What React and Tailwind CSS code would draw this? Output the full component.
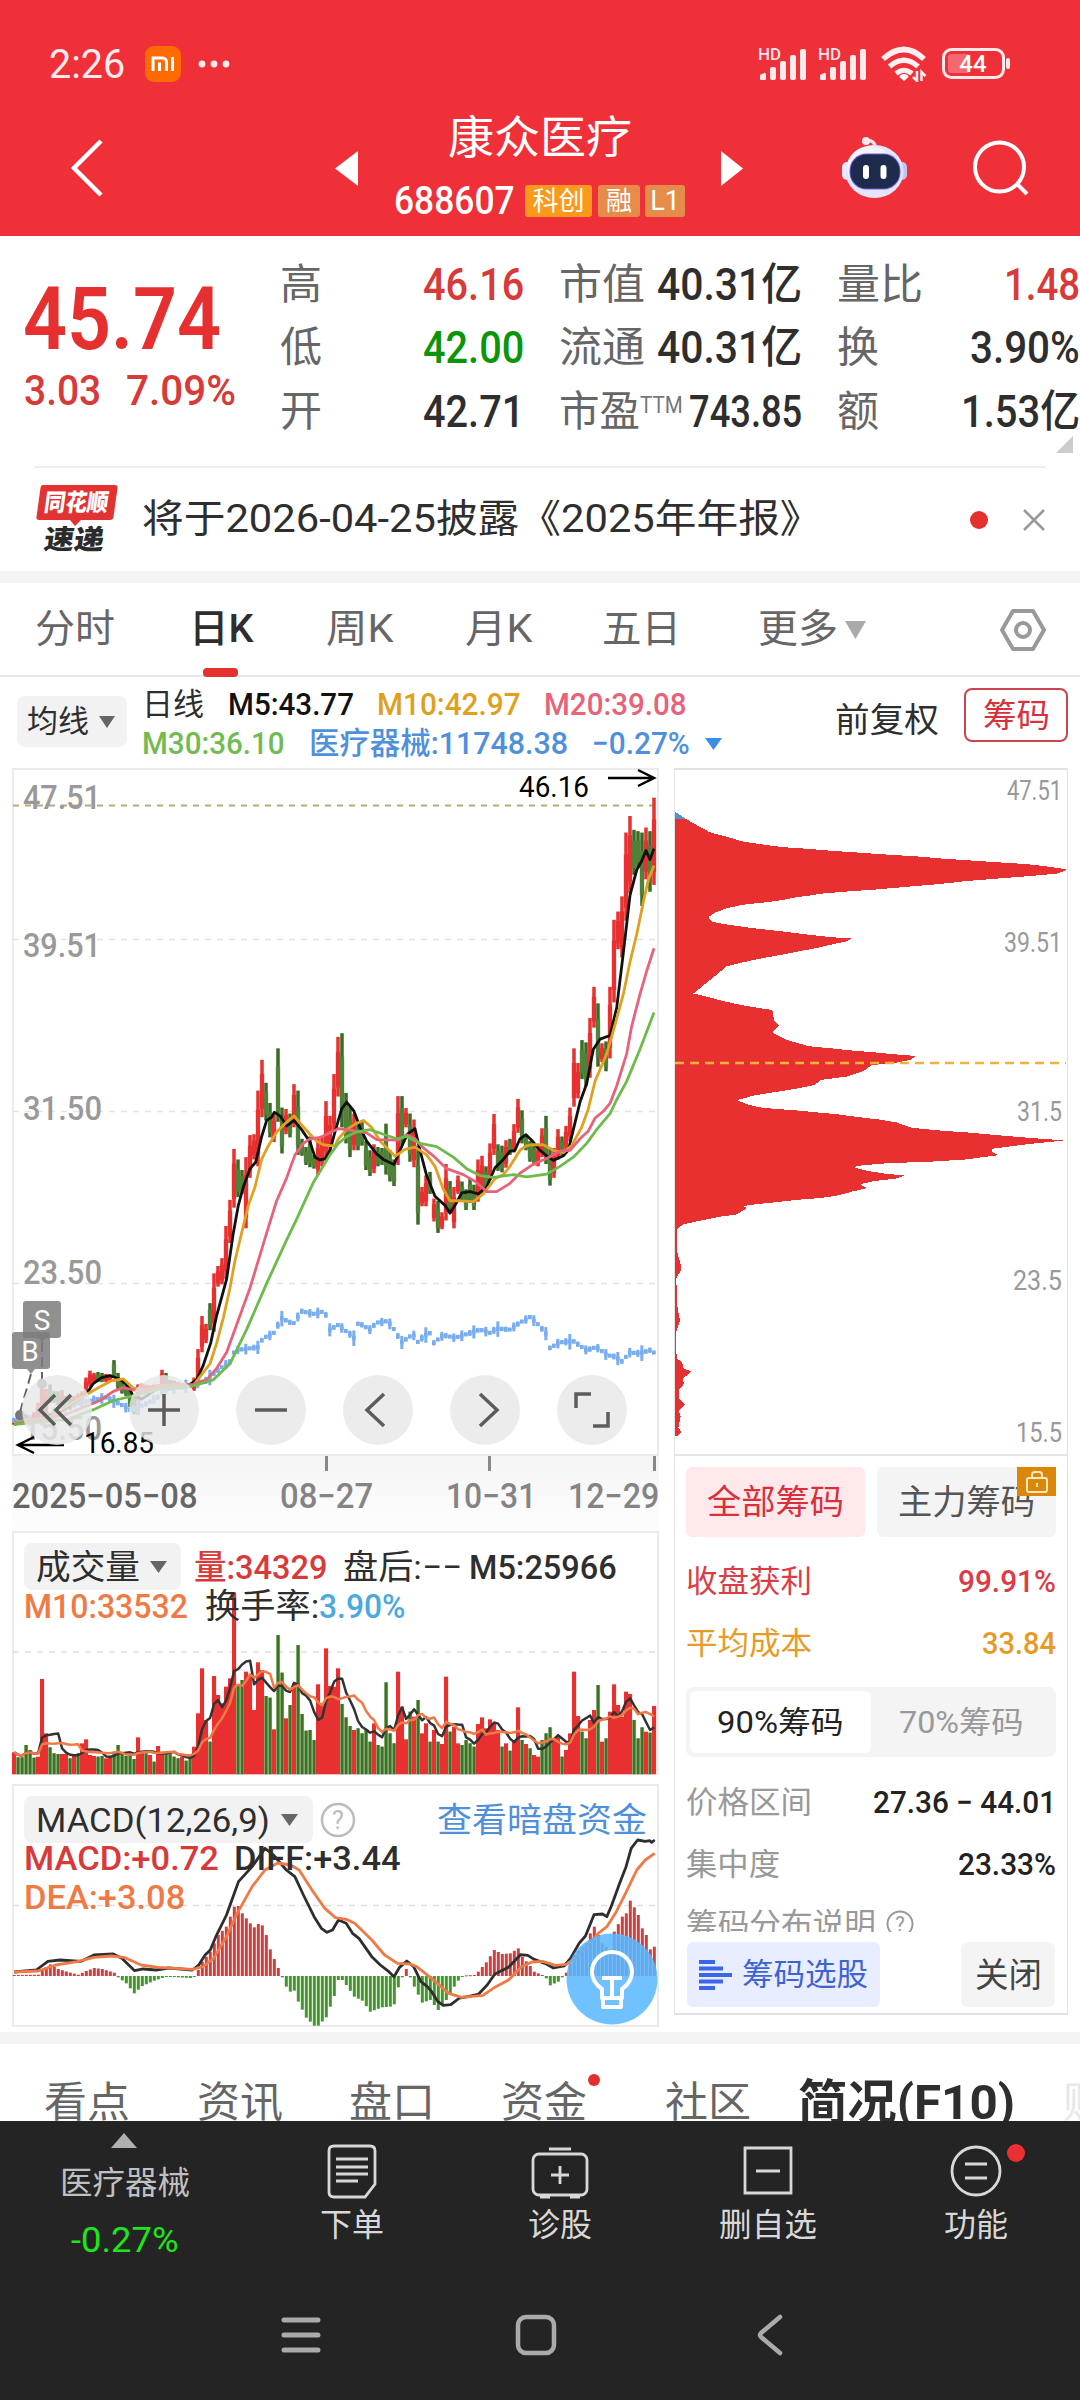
import { useLayoutEffect, useRef, useState } from 'react';

const STEP = 12;

// [high, low, rising] per trading day
const candles = [
  [1436, 1448, 1], [1425, 1447, 0], [1420, 1440, 0], [1425, 1440, 1], [1430, 1445, 0], [1420, 1440, 1],
  [1400, 1440, 1], [1351, 1430, 1], [1370, 1425, 1], [1360, 1400, 0], [1375, 1400, 0], [1375, 1405, 0],
  [1372, 1410, 1], [1385, 1410, 0], [1390, 1415, 0], [1385, 1410, 1], [1380, 1405, 1], [1375, 1395, 1],
  [1345, 1380, 1], [1330, 1365, 1], [1335, 1355, 1], [1333, 1355, 0], [1335, 1355, 0], [1337, 1355, 1],
  [1338, 1352, 1], [1307, 1345, 0], [1335, 1370, 0], [1350, 1380, 0], [1355, 1385, 0], [1365, 1410, 0],
  [1380, 1425, 0], [1360, 1425, 1], [1358, 1380, 1], [1360, 1375, 1], [1362, 1375, 0], [1360, 1372, 1],
  [1360, 1372, 1], [1328, 1365, 1], [1335, 1360, 0], [1350, 1365, 0], [1352, 1366, 0], [1355, 1367, 1],
  [1357, 1368, 0], [1357, 1368, 1], [1357, 1368, 1], [1345, 1374, 1], [1283, 1358, 1], [1211, 1290, 1],
  [1228, 1270, 1], [1183, 1242, 0], [1118, 1245, 1], [1102, 1147, 1], [1085, 1142, 1], [1015, 1130, 1],
  [958, 1052, 1], [847, 975, 1], [870, 952, 0], [893, 945, 0], [865, 1020, 1], [817, 910, 1],
  [815, 870, 1], [720, 885, 1], [653, 778, 1], [703, 785, 0], [747, 822, 0], [770, 832, 1],
  [628, 788, 0], [757, 857, 0], [760, 815, 1], [770, 822, 0], [706, 800, 1], [720, 860, 0],
  [825, 862, 0], [843, 882, 0], [820, 887, 0], [860, 890, 0], [825, 904, 1], [820, 885, 1],
  [743, 872, 1], [775, 850, 1], [684, 812, 1], [603, 733, 1], [595, 800, 0], [725, 835, 0],
  [755, 865, 0], [770, 850, 1], [790, 850, 0], [785, 840, 0], [830, 893, 0], [850, 906, 0],
  [837, 900, 1], [843, 885, 0], [845, 882, 0], [792, 903, 0], [850, 918, 0], [870, 928, 0],
  [732, 882, 1], [732, 840, 0], [758, 800, 1], [770, 875, 0], [783, 887, 1], [840, 1012, 0],
  [930, 972, 1], [905, 972, 1], [897, 945, 0], [955, 1005, 1], [960, 1030, 0], [985, 1022, 1],
  [880, 1003, 1], [917, 985, 0], [930, 1020, 1], [905, 945, 1], [918, 960, 0], [935, 980, 0],
  [910, 965, 0], [925, 980, 0], [870, 962, 1], [862, 945, 1], [885, 935, 0], [835, 915, 1],
  [771, 860, 1], [837, 895, 0], [840, 898, 0], [828, 888, 1], [825, 860, 0], [793, 855, 1],
  [738, 812, 1], [763, 835, 0], [815, 850, 0], [830, 875, 0], [835, 883, 0], [840, 885, 1],
  [802, 865, 1], [775, 880, 0], [845, 927, 0], [845, 910, 1], [804, 870, 1], [820, 860, 0],
  [797, 850, 1], [757, 830, 1], [628, 755, 1], [660, 737, 1], [610, 695, 0], [615, 710, 0],
  [562, 692, 1], [494, 583, 1], [530, 668, 0], [617, 658, 1], [613, 678, 0], [494, 650, 1],
  [348, 528, 1], [330, 412, 1], [297, 430, 1], [158, 350, 1], [122, 290, 1], [152, 250, 0],
  [155, 235, 0], [158, 318, 0], [147, 260, 1], [155, 287, 0], [82, 272, 1],
];

const ma5 =
  '42,1447 100,1438 180,1420 260,1380 280,1358 305,1345 330,1341 355,1347 380,1360 400,1385 425,1392 450,1380 480,1365 560,1365 590,1350 610,1318 632,1270 650,1210 680,1130 700,1030 715,970 730,930 750,890 767,876 785,820 800,785 815,778 823,767 840,775 860,797 882,785 905,805 930,832 945,865 960,871 975,869 990,850 1005,810 1025,760 1040,745 1062,765 1080,800 1100,830 1130,858 1150,870 1182,881 1200,850 1222,815 1245,803 1260,850 1280,905 1305,950 1335,970 1350,987 1365,970 1385,943 1410,940 1435,945 1460,930 1485,888 1510,870 1530,852 1545,850 1560,825 1578,816 1595,828 1620,850 1645,865 1660,872 1690,862 1705,850 1720,805 1740,745 1760,705 1780,630 1800,608 1830,600 1850,540 1870,420 1890,295 1910,240 1925,220 1938,197 1950,217 1962,193';
const ma10 =
  '42,1445 150,1430 240,1390 300,1365 335,1352 370,1348 400,1368 450,1375 480,1368 580,1362 630,1315 650,1270 670,1215 690,1150 705,1090 725,1030 745,970 765,930 785,870 805,840 830,810 855,792 882,775 905,795 930,815 950,830 970,838 990,840 1005,840 1015,825 1040,805 1065,793 1090,785 1115,800 1140,830 1185,863 1215,848 1245,843 1280,860 1305,885 1330,935 1350,960 1380,960 1420,962 1450,945 1485,912 1510,903 1530,885 1560,850 1580,840 1600,838 1630,838 1660,850 1690,855 1715,840 1745,800 1765,760 1785,700 1820,640 1840,590 1870,510 1890,440 1910,380 1930,310 1945,260 1962,230';
const ma20 =
  '42,1447 200,1425 300,1395 340,1375 370,1367 420,1375 480,1362 580,1360 620,1350 650,1325 680,1290 720,1210 750,1150 800,1030 830,960 860,910 885,860 910,835 930,825 960,822 1015,803 1040,805 1100,812 1130,827 1195,828 1220,816 1245,825 1270,845 1300,862 1340,890 1390,903 1430,920 1460,940 1490,940 1530,922 1560,900 1600,880 1640,868 1680,852 1710,850 1740,825 1765,808 1785,780 1810,765 1830,748 1850,710 1880,640 1895,580 1920,510 1940,460 1962,410';
const ma30 =
  '42,1447 200,1437 280,1415 340,1395 400,1385 480,1370 580,1363 640,1350 690,1315 740,1240 800,1140 860,1045 890,1000 940,920 990,860 1015,835 1040,820 1070,810 1110,805 1150,815 1190,825 1220,820 1260,835 1310,842 1360,865 1400,890 1440,905 1480,909 1540,903 1580,908 1640,902 1680,885 1720,865 1760,835 1790,805 1830,770 1850,740 1880,700 1920,630 1962,550';

// sector index, drawn under the price
const sector = [
  [42, 1438], [120, 1437], [200, 1405], [240, 1400], [280, 1393], [320, 1388], [360, 1402], [390, 1415],
  [430, 1405], [480, 1385], [490, 1372], [580, 1360], [620, 1350], [660, 1325], [690, 1310], [705, 1285],
  [740, 1282], [775, 1278], [790, 1258], [820, 1250], [845, 1215], [880, 1228], [905, 1200], [940, 1206],
  [975, 1200], [990, 1240], [1015, 1230], [1050, 1250], [1062, 1258], [1075, 1225], [1110, 1240],
  [1130, 1225], [1160, 1222], [1175, 1230], [1205, 1268], [1240, 1250], [1254, 1267], [1275, 1252],
  [1290, 1248], [1300, 1270], [1330, 1252], [1365, 1258], [1400, 1250], [1440, 1240], [1470, 1247],
  [1490, 1238], [1530, 1240], [1560, 1225], [1590, 1213], [1610, 1225], [1640, 1250], [1650, 1280],
  [1680, 1268], [1720, 1265], [1760, 1285], [1790, 1278], [1820, 1295], [1850, 1300], [1865, 1310],
  [1890, 1290], [1920, 1292], [1950, 1285], [1962, 1290],
];

const sectorBars = [9, 5, 14, 6, 18, 4, 10, 22, 8, 6, 16, 5, 12, 26, 7, 9, 4, 15];

// negative = falling day; the number is the top of the bar
const volumes = [
  937, -952, -952, -915, -930, -953, 950, 717, 880, -922, -940, -942, 942, 942, -955, 948, -940, 910, 898,
  945, 948, -950, -948, 955, 950, -935, -915, -942, -948, -945, -957, 892, 935, -940, 945, -965, 918, 935,
  -935, -940, -950, -955, 950, -962, -950, 920, 820, 685, 840, -905, 708, 765, 790, 740, 715, 457, -735,
  -720, 695, 705, 810, 667, 690, -768, -773, 868, -585, -698, 835, -795, 730, -615, -822, -872, -870, -900,
  733, 790, 625, 738, 740, 685, -792, -832, -858, 870, -865, -880, -870, -905, 850, -915, -920, -727, -880,
  -910, 695, 800, 898, -815, 830, -780, 880, 850, -905, 870, -905, 912, 710, -875, 860, 910, -915, -900,
  -910, -920, 852, 832, 865, 838, 850, 870, -920, 910, -932, 900, 802, -900, 912, -925, 945, 950, -900,
  -880, -862, 895, 890, -950, 930, 880, 695, 828, -875, -895, 840, 810, -735, 905, -895, 815, 733, 795, 830,
  755, 762, -840, -895, -862, 875, -878, 798,
];

const macdBars = [
  [0, 615], [6, 614], [7, 600], [9, 583], [11, 597], [14, 608], [16, 614], [18, 603], [20, 594], [22, 597],
  [25, 608], [26, 622], [28, 640], [30, 670], [32, 648], [35, 632], [38, 620], [44, 624], [45, 621],
  [46, 600], [47, 575], [49, 545], [51, 495], [53, 470], [55, 410], [56, 408], [57, 430], [59, 460],
  [60, 472], [61, 462], [62, 466], [63, 495], [64, 538], [65, 567], [66, 594], [67, 622], [68, 650],
  [69, 665], [70, 662], [71, 695], [73, 743], [75, 767], [76, 767], [78, 742], [80, 678], [81, 630],
  [82, 630], [83, 645], [85, 680], [87, 692], [89, 725], [92, 712], [94, 710], [95, 703], [96, 652],
  [97, 622], [98, 597], [99, 622], [100, 650], [102, 698], [104, 690], [105, 705], [106, 720], [108, 690],
  [110, 650], [111, 632], [112, 620], [113, 616], [115, 615], [116, 605], [118, 577], [120, 540],
  [122, 552], [124, 550], [126, 535], [127, 560], [129, 588], [130, 605], [132, 615], [133, 625],
  [134, 646], [136, 635], [137, 622], [138, 608], [140, 555], [142, 530], [143, 520], [144, 490],
  [145, 470], [146, 495], [147, 520], [149, 540], [150, 485], [152, 440], [153, 430], [154, 392],
  [155, 412], [156, 435], [157, 475], [158, 495], [159, 538], [160, 530],
];

const diffLine =
  '33,606 85,600 112,574 140,570 190,574 220,555 265,552 285,565 315,602 335,597 365,600 395,594 450,600 465,585 480,555 492,540 505,500 530,435 558,335 590,290 620,235 640,255 670,300 690,320 710,375 735,440 752,475 765,487 778,480 792,450 810,460 825,490 840,505 870,560 890,585 910,605 922,620 935,592 952,573 968,590 985,635 1000,650 1010,665 1025,695 1037,706 1055,704 1075,684 1095,680 1120,672 1140,645 1158,612 1190,592 1218,554 1235,556 1250,568 1275,580 1295,594 1320,588 1335,565 1355,520 1370,498 1390,434 1410,432 1420,440 1430,410 1450,340 1465,290 1477,235 1492,210 1510,214 1520,212 1525,217 1532,210';
const deaLine =
  '33,606 90,603 130,585 180,575 220,562 260,558 290,562 330,585 370,592 450,598 475,590 500,565 530,500 555,430 590,350 620,300 650,279 680,285 700,300 730,360 760,415 785,443 810,448 830,460 870,510 900,555 930,580 960,582 975,590 1010,625 1050,670 1080,682 1130,676 1160,650 1190,630 1220,590 1245,576 1270,574 1300,586 1325,583 1350,560 1400,490 1420,470 1440,430 1460,380 1490,300 1510,270 1532,250';

const chipShape = [
  [65, 133], [100, 148], [135, 162], [195, 174], [235, 183], [300, 190], [350, 195], [430, 199], [510, 204],
  [590, 208], [670, 212], [755, 216], [835, 221], [915, 225], [995, 229], [1080, 233], [1130, 237],
  [1170, 241], [1207, 245], [1180, 254], [1110, 259], [1040, 263], [975, 267], [905, 271], [848, 276],
  [790, 280], [710, 285], [635, 290], [555, 294], [475, 299], [430, 304], [390, 308], [350, 314],
  [300, 319], [235, 324], [185, 332], [150, 342], [130, 352], [140, 362], [180, 368], [255, 376],
  [340, 383], [395, 388], [450, 393], [500, 397], [560, 400], [545, 406], [490, 415], [450, 422],
  [405, 428], [365, 434], [285, 445], [235, 453], [185, 462], [140, 490], [85, 523], [130, 531], [180, 541],
  [230, 549], [285, 556], [322, 560], [328, 585], [342, 594], [322, 611], [365, 627], [430, 641],
  [500, 646], [550, 650], [615, 654], [685, 659], [753, 663], [735, 672], [680, 680], [620, 683],
  [595, 697], [545, 709], [465, 717], [450, 728], [380, 738], [320, 745], [270, 751], [215, 762],
  [250, 772], [290, 779], [410, 786], [520, 794], [580, 800], [640, 805], [695, 812], [740, 824],
  [840, 831], [920, 835], [990, 840], [1070, 845], [1140, 849], [1200, 852], [1120, 858], [1060, 863],
  [980, 871], [983, 880], [1002, 885], [950, 890], [900, 895], [790, 900], [670, 903], [590, 908],
  [565, 912], [610, 921], [665, 927], [720, 931], [690, 938], [630, 943], [585, 950], [605, 959],
  [560, 967], [520, 975], [470, 981], [400, 985], [340, 990], [285, 994], [235, 999], [245, 1004],
  [215, 1018], [165, 1023], [105, 1032], [55, 1040], [37, 1050], [36, 1100], [47, 1130], [47, 1145],
  [34, 1160], [36, 1220], [45, 1255], [32, 1285], [35, 1340], [52, 1350], [55, 1362], [78, 1370],
  [55, 1385], [56, 1398], [43, 1410], [42, 1430], [60, 1444], [42, 1458], [47, 1470], [40, 1495],
  [48, 1505], [38, 1515],
];

function lerp(points, x) {
  for (let i = 1; i < points.length; i++) {
    const [x0, y0] = points[i - 1];
    const [x1, y1] = points[i];
    if (x <= x1) return y0 + ((y1 - y0) * (x - x0)) / (x1 - x0);
  }
  return points[points.length - 1][1];
}

function average(values, i, size) {
  const part = values.slice(Math.max(0, i - size + 1), i + 1);
  return part.reduce((a, b) => a + b, 0) / part.length;
}

// Squeezes or stretches one line of text to the width of its box
function FitText({ className = '', children }) {
  const outer = useRef(null);
  const inner = useRef(null);
  const [scale, setScale] = useState(1);

  useLayoutEffect(() => {
    setScale(outer.current.clientWidth / inner.current.offsetWidth);
  }, [children]);

  return (
    <span ref={outer} className={`block shrink-0 whitespace-nowrap leading-none ${className}`}>
      <span ref={inner} className="inline-block origin-left" style={{ transform: `scaleX(${scale})` }}>
        {children}
      </span>
    </span>
  );
}

function Caret({ className = '' }) {
  return (
    <svg viewBox="0 0 16 12" preserveAspectRatio="none" className={`shrink-0 ${className}`} fill="currentColor">
      <path d="M0 0h16L8 12z" />
    </svg>
  );
}

function Signal() {
  return (
    <svg width="52" height="34" viewBox="0 0 52 34" fill="#fff" fillOpacity=".9">
      <text x="0" y="13" fontSize="16" fontWeight="500" textLength="23" lengthAdjust="spacingAndGlyphs">HD</text>
      <path d="M2 32v-3q0-2 2-2l2-1q2-1 2 2v4q0 1-1 1H3q-1 0-1-1z" />
      <rect x="12" y="20" width="6" height="13" rx="2" />
      <rect x="22" y="14" width="6" height="19" rx="2" />
      <rect x="32" y="8" width="6" height="25" rx="2" />
      <rect x="42" y="2" width="6" height="31" rx="2" />
    </svg>
  );
}

function StatusBar() {
  return (
    <div className="flex h-[92px] items-center pt-9 pl-[49px]">
      <FitText className="mt-0.5 w-[76px] text-[40px] text-white/90">2:26</FitText>
      <svg width="36" height="36" viewBox="0 0 36 36" className="ml-5">
        <rect width="36" height="36" rx="9" fill="#ff6b00" />
        <path d="M8 25V12h9.500a4 4 0 0 1 4 4v9M14.500 25v-8.500M27.500 11v14" fill="none" stroke="#fff" strokeWidth="3" />
      </svg>
      <svg width="32" height="10" viewBox="0 0 32 10" className="ml-[17px]" fill="#fff" fillOpacity=".9">
        <circle cx="4" cy="5" r="3.400" />
        <circle cx="16" cy="5" r="3.400" />
        <circle cx="28" cy="5" r="3.400" />
      </svg>
      <div className="ml-[528px] flex items-center">
        <Signal />
        <div className="w-2" />
        <Signal />
        <svg width="48" height="36" viewBox="0 0 48 36" className="ml-2.5" fill="none" stroke="#fff" strokeOpacity=".92" strokeWidth="5.500">
          <path d="M3 13Q24-6 44 13" />
          <path d="M9.500 20.500Q24 8 38 20.500" />
          <path d="M16 27.500Q24 21 32 27.500" strokeWidth="5" />
          <path d="M24 35l-4.500-4q0-3 4.500-3t4.500 3z" fill="#fff" stroke="none" />
          <path d="M37 25v10l-4-4M41.500 35V26l4 4" strokeWidth="2.500" />
        </svg>
        <svg width="70" height="32" viewBox="0 0 70 32" className="ml-3.5">
          <rect x="1.500" y="1.500" width="60" height="28" rx="8" fill="none" stroke="#fff" strokeOpacity=".9" strokeWidth="3" />
          <rect x="6" y="6" width="22" height="19" rx="3" fill="#fff" fillOpacity=".28" />
          <rect x="64" y="10" width="4" height="11" rx="2" fill="#fff" fillOpacity=".9" />
          <text x="31" y="24" fontSize="24" fontWeight="500" fill="#fff" textAnchor="middle">44</text>
        </svg>
      </div>
    </div>
  );
}

function Robot() {
  return (
    <svg width="67" height="64" viewBox="0 0 67 64" className="ml-[98px]">
      <path d="M25 4.500q9-1 9.500 8" fill="none" stroke="#f6dfee" strokeWidth="3.500" />
      <circle cx="25" cy="5" r="4" fill="#ffe9f1" />
      <rect x="1" y="26" width="10" height="18" rx="5" fill="#eceafb" />
      <rect x="56" y="26" width="10" height="18" rx="5" fill="#c3c6f0" />
      <ellipse cx="33.500" cy="35.500" rx="29" ry="26.500" fill="#e4e5fb" />
      <ellipse cx="29" cy="32" rx="23" ry="22" fill="#f4f2fd" />
      <rect x="8.500" y="17.500" width="51" height="36" rx="17" fill="#6a5ce0" />
      <rect x="9.500" y="18.500" width="49" height="34" rx="16" fill="#1f2b4d" />
      <rect x="22" y="29" width="6" height="14" rx="3" fill="#fff" />
      <rect x="39.500" y="29" width="6" height="14" rx="3" fill="#fff" />
    </svg>
  );
}

function NavBar() {
  return (
    <div className="flex h-[144px] items-center pt-2 pl-[70px]">
      <svg width="34" height="58" viewBox="0 0 34 58" fill="none" stroke="#fff" strokeWidth="4.500">
        <path d="M31 2L4 29l27 27" />
      </svg>
      <svg width="23" height="35" viewBox="0 0 23 35" className="ml-[231px]" fill="#fff">
        <path d="M23 0v35L0 17.500z" />
      </svg>
      <div className="flex w-[363px] flex-col items-center">
        <FitText className="w-[184px] text-[45px] text-white">康众医疗</FitText>
        <div className="mt-[21px] flex items-center">
          <FitText className="w-[121px] text-[38px] font-medium text-white">688607</FitText>
          <span className="ml-2.5 flex h-8 w-[67px] items-center justify-center rounded-[3px] bg-[#fa991c] text-[26px] leading-none text-white">科创</span>
          <span className="ml-1.5 flex h-8 w-[42px] items-center justify-center rounded-[3px] bg-[#e58c4a] text-[26px] leading-none text-white">融</span>
          <span className="ml-[5px] flex h-8 w-10 items-center justify-center rounded-[3px] bg-[#e58c4a] text-[27px] leading-none text-white">L1</span>
        </div>
      </div>
      <svg width="22" height="35" viewBox="0 0 22 35" fill="#fff">
        <path d="M0 0v35l22-17.500z" />
      </svg>
      <Robot />
      <svg width="58" height="56" viewBox="0 0 58 56" className="ml-[65px]" fill="none" stroke="#fff" strokeWidth="4">
        <circle cx="26.500" cy="27" r="24.500" />
        <path d="M44 44l10 10" />
      </svg>
    </div>
  );
}

function Stat({ label, sup, value, color = 'text-[#2e2e2e]', labelWidth, width }) {
  return (
    <div className="flex h-[63.500px] items-center">
      <FitText className={`-ml-px text-[42px] text-[#666] ${labelWidth}`}>{label}</FitText>
      {sup && <FitText className="mb-3 w-[43px] text-[23px] text-[#777]">{sup}</FitText>}
      <div className="flex-1" />
      <FitText className={`text-[44px] font-medium ${color} ${width}`}>{value}</FitText>
    </div>
  );
}

function Quote() {
  return (
    <section className="flex h-[230px] pl-6">
      <div className="w-[257px] pt-[39px]">
        <FitText className="-ml-px w-[198px] text-[88px] font-semibold text-[#e63030]">45.74</FitText>
        <div className="mt-1.5 flex">
          <FitText className="w-[77px] text-[43px] font-medium text-[#d83a3a]">3.03</FitText>
          <FitText className="ml-[25px] w-[110px] text-[43px] font-medium text-[#d83a3a]">7.09%</FitText>
        </div>
      </div>
      <div className="w-[243px] pt-[17px]">
        <Stat label="高" labelWidth="w-[42px]" value="46.16" color="text-[#d83a3a]" width="w-[101px]" />
        <Stat label="低" labelWidth="w-[42px]" value="42.00" color="text-[#0a950a]" width="w-[101px]" />
        <Stat label="开" labelWidth="w-[42px]" value="42.71" width="w-[101px]" />
      </div>
      <div className="ml-9 w-[242px] pt-[17px]">
        <Stat label="市值" labelWidth="w-[86px]" value="40.31亿" width="w-[145px]" />
        <Stat label="流通" labelWidth="w-[86px]" value="40.31亿" width="w-[145px]" />
        <Stat label="市盈" sup="TTM" labelWidth="w-[81px]" value="743.85" width="w-[113px]" />
      </div>
      <div className="relative ml-9 w-[242px] pt-[17px]">
        <Stat label="量比" labelWidth="w-[86px]" value="1.48" color="text-[#d83a3a]" width="w-[76px]" />
        <Stat label="换" labelWidth="w-[42px]" value="3.90%" width="w-[110px]" />
        <Stat label="额" labelWidth="w-[42px]" value="1.53亿" width="w-[119px]" />
        <svg width="17" height="17" viewBox="0 0 17 17" className="absolute right-[7px] bottom-[13px]">
          <path d="M17 0v17H0z" fill="#ccc" />
        </svg>
      </div>
    </section>
  );
}

function News() {
  return (
    <section className="mx-[35px] flex h-[105px] items-center border-t-2 border-[#ececec]">
      <svg width="84" height="70" viewBox="0 0 84 70">
        <path d="M8 0h72q3 0 2.500 3l-4 29q-.5 3-3.500 3H46l-6 6-5-6H4q-3 0-2.500-3l4-29q.5-3 2.500-3z" fill="#e23232" />
        <text x="9" y="26" fontSize="24" fontWeight="900" fill="#fff" textLength="64" lengthAdjust="spacingAndGlyphs" transform="skewX(-8) translate(3 0)">同花顺</text>
        <text x="9" y="64" fontSize="27" fontWeight="900" fill="#2b2b2b" textLength="60" lengthAdjust="spacingAndGlyphs" transform="skewX(-8) translate(8 0)">速递</text>
      </svg>
      <FitText className="ml-[23px] w-[680px] text-[39px] text-[#2e2e2e]">将于2026-04-25披露《2025年年报》</FitText>
      <span className="ml-[148px] size-[18px] shrink-0 rounded-full bg-[#e63030]" />
      <svg width="22" height="22" viewBox="0 0 22 22" className="ml-[35px] shrink-0" stroke="#999" strokeWidth="2.500">
        <path d="M1 1l20 20M21 1L1 21" />
      </svg>
    </section>
  );
}

function PeriodTabs() {
  return (
    <div className="flex h-[94px] items-center border-b-2 border-[#e6e6e6] pt-px pl-[35px] text-[39px] text-[#666]">
      <FitText className="w-[80px]">分时</FitText>
      <div className="relative ml-[74px]">
        <FitText className="w-[65px] font-medium text-[#2e2e2e]">日K</FitText>
        <span className="absolute top-[58px] left-[14px] h-[9px] w-[35px] rounded-[4px] bg-[#e63030]" />
      </div>
      <FitText className="ml-[72px] w-[67px]">周K</FitText>
      <FitText className="ml-[72px] w-[67px]">月K</FitText>
      <FitText className="ml-[70px] w-[79px]">五日</FitText>
      <FitText className="ml-[77px] w-[80px]">更多</FitText>
      <Caret className="ml-[7px] h-[18px] w-[21px] text-[#aaa]" />
      <svg width="46" height="44" viewBox="0 0 46 44" className="ml-[134px]" fill="none" stroke="#999" strokeWidth="4">
        <path d="M13 3h20l11 19-11 19H13L2 22z" strokeLinejoin="round" />
        <circle cx="23" cy="22" r="7" />
      </svg>
    </div>
  );
}

function Averages() {
  return (
    <div className="flex h-[90px] items-start pt-[11px] pl-[17px]">
      <div className="mt-2 flex h-[51px] w-[110px] items-center rounded-lg bg-[#f2f2f2] pl-2.5">
        <FitText className="w-[62px] text-[31px] text-[#2e2e2e]">均线</FitText>
        <Caret className="ml-2.5 h-3 w-4 text-[#666]" />
      </div>
      <div className="ml-[15px] w-[693px] text-[31px] font-medium">
        <div className="flex h-[33px] items-center">
          <FitText className="w-[62px] font-normal text-[#2e2e2e]">日线</FitText>
          <FitText className="ml-[24px] w-[126px] text-[#111]">M5:43.77</FitText>
          <FitText className="ml-[23px] w-[144px] text-[#e0a01e]">M10:42.97</FitText>
          <FitText className="ml-[23px] w-[143px] text-[#e8627a]">M20:39.08</FitText>
        </div>
        <div className="mt-1.5 flex h-[33px] items-center">
          <FitText className="w-[143px] text-[#72bb52]">M30:36.10</FitText>
          <FitText className="ml-6 w-[259px] text-[#4f90dc]">医疗器械:11748.38</FitText>
          <FitText className="ml-6 w-[98px] text-[#4f90dc]">−0.27%</FitText>
          <Caret className="ml-[15px] h-3 w-[17px] text-[#3d8de6]" />
        </div>
      </div>
      <FitText className="mt-[15px] w-[104px] text-[34px] text-[#2e2e2e]">前复权</FitText>
      <div className="ml-[25px] flex h-[54px] w-[104px] items-center justify-center rounded-lg border-2 border-[#cc4450]">
        <FitText className="w-[67px] text-[33px] text-[#d8303c]">筹码</FitText>
      </div>
    </div>
  );
}

function PriceLabel({ x, y, w, size = 33, color = '#999', weight = 500, children }) {
  return (
    <text x={x} y={y} fontSize={size} fontWeight={weight} fill={color} textLength={w} lengthAdjust="spacingAndGlyphs">
      {children}
    </text>
  );
}

const controls = [
  { cx: 57, d: 'M55 1395l-15 15 15 15M71 1395l-15 15 15 15' },
  { cx: 164, d: 'M148 1410h32M164 1394v32' },
  { cx: 271, d: 'M255 1410h32' },
  { cx: 378, d: 'M384 1394l-17 16 17 16' },
  { cx: 485, d: 'M480 1394l17 16-17 16' },
  { cx: 592, d: 'M576 1408v-14h15M608 1412v14h-15' },
];

function PriceChart() {
  return (
    <svg viewBox="12 768 647 688" width="647" height="688" className="block">
      <rect x="13" y="769" width="645" height="686" fill="#fff" stroke="#ebebeb" strokeWidth="2" />
      <path d="M13 939.500h645M13 1111.500h645M13 1283.500h645" stroke="#e4e4e4" strokeWidth="1.500" strokeDasharray="6 6" />
      <path d="M13 805.500h645" stroke="#bda87c" strokeWidth="2" strokeDasharray="6 6" />

      <PriceLabel x="23" y="809" w="78">47.51</PriceLabel>
      <PriceLabel x="23" y="957" w="78">39.51</PriceLabel>
      <PriceLabel x="23" y="1120" w="79">31.50</PriceLabel>
      <PriceLabel x="23" y="1284" w="79">23.50</PriceLabel>
      <PriceLabel x="23" y="1440" w="79">15.50</PriceLabel>

      <g transform="translate(0 760) scale(.33333 .45914)">
        {candles.map(([high, low, up], i) => {
          const x = 42 + i * STEP;
          const h = low - high;
          return (
            <g key={i} fill={up ? '#e63230' : '#3c6b25'}>
              <rect x={x - 5.25} y={high} width="10.500" height={h} />
              <rect x={x - 6.5} y={high + h * 0.25} width="13" height={h * 0.6} fill={up ? '#e83030' : '#4f8238'} />
            </g>
          );
        })}
        {candles.map((c, i) => {
          const x = 42 + i * STEP;
          const h = sectorBars[i % sectorBars.length];
          return (
            <g key={i} fill="#78adee">
              <rect x={x - 6} y={lerp(sector, x) - 4} width="11" height="9" />
              <rect x={x - 5} y={lerp(sector, x) - h * 0.6} width="9" height={h * 1.3} />
            </g>
          );
        })}
        <g fill="none" strokeWidth="2.800" strokeLinejoin="round">
          <polyline points={ma5} stroke="#111" vectorEffect="non-scaling-stroke" />
          <polyline points={ma10} stroke="#e0a022" vectorEffect="non-scaling-stroke" />
          <polyline points={ma20} stroke="#e8637a" vectorEffect="non-scaling-stroke" />
          <polyline points={ma30} stroke="#6dbb4b" vectorEffect="non-scaling-stroke" />
        </g>
      </g>

      {/* trade markers */}
      <path d="M42 1342v41M31 1374l-11 38" stroke="#666" strokeWidth="2" strokeDasharray="10 5" />
      <circle cx="42" cy="1384" r="5" fill="#777" />
      <circle cx="20" cy="1415" r="5" fill="#777" />
      <path d="M26 1301h32q3 0 3 3v31q0 3-3 3H46l-4 4-4-4H26q-3 0-3-3v-31q0-3 3-3z" fill="#7d7d7d" fillOpacity=".85" />
      <path d="M15 1332h32q3 0 3 3v31q0 3-3 3H35l-4 5-4-5H15q-3 0-3-3v-31q0-3 3-3z" fill="#7d7d7d" fillOpacity=".85" />
      <text x="42" y="1330" fontSize="28" fill="#fff" textAnchor="middle">S</text>
      <text x="30" y="1361" fontSize="28" fill="#fff" textAnchor="middle">B</text>

      <PriceLabel x="519" y="797" w="70" size={29} color="#000" weight={400}>46.16</PriceLabel>
      <path d="M608 778h45M638 770l16 8-16 8" fill="none" stroke="#000" strokeWidth="2.500" />
      <PriceLabel x="84" y="1453" w="70" size={29} color="#000" weight={400}>16.85</PriceLabel>
      <path d="M64 1445H19M34 1437l-16 8 16 8" fill="none" stroke="#000" strokeWidth="2.500" />

      {controls.map((c) => (
        <g key={c.cx}>
          <circle cx={c.cx} cy="1410" r="35" fill="#e8e8e8" fillOpacity=".82" />
          <path d={c.d} fill="none" stroke="#5c5c5c" strokeWidth="3.500" />
        </g>
      ))}
    </svg>
  );
}

function DateAxis() {
  return (
    <div className="h-[75px] bg-linear-to-b from-[#f5f5f5] to-[#fdfdfd]">
      <div className="flex h-[15px]">
        <span className="ml-[313px] w-[3px] bg-[#888]" />
        <span className="ml-[160px] w-[3px] bg-[#888]" />
        <span className="ml-[162px] w-[3px] bg-[#888]" />
      </div>
      <div className="mt-2 flex text-[35px] font-medium text-[#848484]">
        <FitText className="w-[186px] text-[#666]">2025−05−08</FitText>
        <FitText className="ml-[82px] w-[93px]">08−27</FitText>
        <FitText className="ml-[73px] w-[90px]">10−31</FitText>
        <FitText className="ml-[32px] w-[91px]">12−29</FitText>
      </div>
    </div>
  );
}

function VolumePanel() {
  const tops = volumes.map(Math.abs);
  const line = (size) => tops.map((t, i) => `${33 + i * 9.36},${average(tops, i, size)}`).join(' ');
  return (
    <div className="relative h-[244px] w-[647px] border-x-2 border-t-2 border-[#ebebeb] bg-white pl-[10px]">
      <svg viewBox="12 1531 647 244" width="647" height="244" className="absolute -top-0.5 -left-0.5">
        <path d="M13 1652h645" stroke="#ddd" strokeWidth="1.500" strokeDasharray="6 6" />
        <g transform="translate(0 1440) scale(.42735 .33333)">
          {volumes.map((v, i) => {
            const top = Math.abs(v);
            const x = 33 + i * 9.36;
            if (v > 0) return <rect key={i} x={x - 4.9} y={top} width="9.600" height={1003 - top} fill="#e83030" />;
            return (
              <g key={i}>
                <rect x={x - 4.7} y={top} width="9.400" height={1003 - top} fill="#86b070" />
                <rect x={x - 3} y={top} width="6" height={1003 - top} fill="#3f6f28" />
              </g>
            );
          })}
          <g fill="none" strokeWidth="2.500" strokeLinejoin="round">
            <polyline points={line(5)} stroke="#333" vectorEffect="non-scaling-stroke" />
            <polyline points={line(10)} stroke="#f07a45" vectorEffect="non-scaling-stroke" />
          </g>
        </g>
      </svg>
      <div className="relative pt-[10px] text-[34px]">
        <div className="flex items-center">
          <div className="flex h-[47px] w-[157px] items-center rounded-lg bg-[#f2f2f2] pl-3">
            <FitText className="w-[104px] text-[#2e2e2e]">成交量</FitText>
            <Caret className="ml-2.5 h-3 w-[17px] text-[#666]" />
          </div>
          <FitText className="ml-[13px] w-[134px] font-medium text-[#d83a3a]">量:34329</FitText>
          <FitText className="ml-[15px] w-[119px] text-[#2e2e2e]">盘后:−−</FitText>
          <FitText className="ml-[7px] w-[148px] font-medium text-[#2e2e2e]">M5:25966</FitText>
        </div>
        <div className="-mt-px flex">
          <FitText className="w-[164px] font-medium text-[#f07a45]">M10:33532</FitText>
          <FitText className="ml-[17px] w-[114px] text-[#2e2e2e]">换手率:</FitText>
          <FitText className="w-[86px] font-medium text-[#4ba9e0]">3.90%</FitText>
        </div>
      </div>
    </div>
  );
}

function MacdPanel() {
  return (
    <div className="relative mt-[9px] h-[243px] w-[647px] border-2 border-[#ebebeb] bg-white pl-[10px]">
      <svg viewBox="12 1784 647 243" width="647" height="243" className="absolute -top-0.5 -left-0.5">
        <path d="M13 1905.500h645" stroke="#ddd" strokeWidth="1.500" strokeDasharray="6 6" />
        <g transform="translate(0 1770) scale(.42735 .33333)">
          {volumes.map((v, i) => {
            const y = lerp(macdBars, i);
            const up = y < 618;
            return (
              <rect
                key={i}
                x={30 + i * 9.36}
                y={up ? y : 618}
                width="7"
                height={Math.max(3, Math.abs(618 - y))}
                fill={up ? '#cf4040' : '#45962f'}
              />
            );
          })}
          <g fill="none" strokeWidth="2.800" strokeLinejoin="round">
            <polyline points={diffLine} stroke="#2e2e2e" vectorEffect="non-scaling-stroke" />
            <polyline points={deaLine} stroke="#f07a45" vectorEffect="non-scaling-stroke" />
          </g>
        </g>
      </svg>
      <div className="relative pt-[10px] text-[34px]">
        <div className="flex items-center">
          <div className="flex h-[47px] w-[289px] items-center rounded-lg bg-[#f2f2f2] pl-3">
            <FitText className="w-[234px] text-[#2e2e2e]">MACD(12,26,9)</FitText>
            <Caret className="ml-[11px] h-3 w-[17px] text-[#666]" />
          </div>
          <svg width="36" height="36" viewBox="0 0 36 36" className="ml-[7px]">
            <circle cx="18" cy="18" r="16" fill="none" stroke="#bbb" strokeWidth="2.500" />
            <text x="18" y="27" fontSize="25" fill="#bbb" textAnchor="middle">?</text>
          </svg>
          <FitText className="ml-[81px] w-[210px] text-[#4f90dc]">查看暗盘资金</FitText>
        </div>
        <div className="mt-[-2px] flex">
          <FitText className="w-[195px] font-medium text-[#d83a3a]">MACD:+0.72</FitText>
          <FitText className="ml-[15px] w-[167px] font-medium text-[#2e2e2e]">DIFF:+3.44</FitText>
        </div>
        <FitText className="mt-[5px] w-[161px] font-medium text-[#f07a45]">DEA:+3.08</FitText>
      </div>
      <svg width="92" height="92" viewBox="0 0 92 92" className="absolute -right-px bottom-0">
        <circle cx="46" cy="46" r="45.500" fill="#5ab8ff" fillOpacity=".87" />
        <g fill="none" stroke="#fff" strokeWidth="4" strokeLinejoin="round">
          <path d="M36 65V56q-10-7-10-17a20 20 0 0 1 40 0q0 10-10 17v9z" />
          <path d="M37 65v9h18v-9M36 45h20M46 45v19" />
        </g>
      </svg>
    </div>
  );
}

function ChipChart() {
  const points = [[30, 133], ...chipShape, [30, 1515]].map((p) => p.join(',')).join(' ');
  return (
    <svg viewBox="675 770 391 684" width="391" height="684" className="block">
      <g transform="translate(665 760) scale(.33333 .44643)" shapeRendering="crispEdges">
        <path d="M30 116l35 17H30z" fill="#4f90dc" />
        <polygon points={points} fill="#e83030" />
      </g>
      <path d="M675 1063h391" stroke="#efb33d" strokeWidth="2.500" strokeDasharray="9 6" />
      <PriceLabel x="1007" y="800" w="55" size={27} weight={400}>47.51</PriceLabel>
      <PriceLabel x="1004" y="952" w="58" size={27} weight={400}>39.51</PriceLabel>
      <PriceLabel x="1017" y="1121" w="45" size={27} weight={400}>31.5</PriceLabel>
      <PriceLabel x="1013" y="1290" w="49" size={27} weight={400}>23.5</PriceLabel>
      <PriceLabel x="1016" y="1442" w="46" size={27} weight={400}>15.5</PriceLabel>
    </svg>
  );
}

function ChipRow({ label, value, labelWidth = 'w-[126px]', width, labelColor = 'text-[#999]', color = 'text-[#222]' }) {
  return (
    <div className="flex h-[62px] items-center justify-between">
      <FitText className={`text-[31px] ${labelWidth} ${labelColor}`}>{label}</FitText>
      <FitText className={`text-[31px] font-medium ${width} ${color}`}>{value}</FitText>
    </div>
  );
}

function ChipPanel() {
  return (
    <div className="ml-[15px] h-[1247px] w-[394px] border-x border-y-2 border-[#e2e2e2] bg-white">
      <ChipChart />
      <div className="border-t-2 border-[#e6e6e6] pt-[11px] pr-[11px] pl-[11px]">
        <div className="flex justify-between">
          <div className="flex h-[70px] w-[179px] items-center justify-center rounded-md bg-[#ffe9ea]">
            <FitText className="w-[137px] text-[34px] text-[#d8303c]">全部筹码</FitText>
          </div>
          <div className="relative flex h-[70px] w-[179px] items-center justify-center rounded-md bg-[#f4f4f4]">
            <FitText className="w-[137px] text-[34px] text-[#555]">主力筹码</FitText>
            <svg width="39" height="29" viewBox="0 0 39 29" className="absolute top-0 right-0">
              <rect width="39" height="29" fill="#dc860a" />
              <g fill="none" stroke="#ffe9bd" strokeWidth="2">
                <rect x="10" y="11" width="20" height="14" rx="2" />
                <path d="M15 11V8q0-3 3-3h4q3 0 3 3v3M20 16v4" />
              </g>
            </svg>
          </div>
        </div>
        <div className="mt-[13px]">
          <ChipRow label="收盘获利" value="99.91%" width="w-[98px]" labelColor="text-[#dc3c46]" color="text-[#dc3c46]" />
          <ChipRow label="平均成本" value="33.84" width="w-[74px]" labelColor="text-[#e89a28]" color="text-[#e89a28]" />
        </div>
        <div className="mt-[13px] flex h-[70px] rounded-lg bg-[#f4f4f4] p-1">
          <div className="flex w-[181px] items-center justify-center rounded-md bg-white">
            <FitText className="w-[127px] text-[31px] text-[#222]">90%筹码</FitText>
          </div>
          <div className="flex flex-1 items-center justify-center">
            <FitText className="w-[125px] text-[31px] text-[#999]">70%筹码</FitText>
          </div>
        </div>
        <div className="mt-[14px] h-[161px] overflow-hidden">
          <ChipRow label="价格区间" value="27.36 − 44.01" width="w-[183px]" />
          <ChipRow label="集中度" value="23.33%" labelWidth="w-[94px]" width="w-[98px]" />
          <div className="flex h-[58px] items-center">
            <FitText className="w-[190px] text-[31px] text-[#999]">筹码分布说明</FitText>
            <svg width="28" height="28" viewBox="0 0 28 28" className="ml-[10px]">
              <circle cx="14" cy="14" r="12.500" fill="none" stroke="#999" strokeWidth="2" />
              <text x="14" y="21" fontSize="20" fill="#999" textAnchor="middle">?</text>
            </svg>
          </div>
        </div>
        <div className="mt-2.5 flex justify-between">
          <div className="ml-px flex h-[65px] w-[193px] items-center rounded-md bg-[#e8eeff] pl-3">
            <svg width="33" height="32" viewBox="0 0 33 32" stroke="#3b66ea" strokeWidth="4">
              <path d="M0 3h16M0 9.500h24M0 16h33M0 22.500h24M0 29h16" />
            </svg>
            <FitText className="ml-2.5 w-[126px] text-[31px] text-[#3f62d4]">筹码选股</FitText>
          </div>
          <div className="mr-px flex h-[65px] w-[94px] items-center justify-center rounded-md bg-[#f4f4f4]">
            <FitText className="w-[67px] text-[34px] text-[#444]">关闭</FitText>
          </div>
        </div>
      </div>
    </div>
  );
}

function InfoTabs() {
  return (
    <div className="h-[89px] overflow-hidden border-t-[12px] border-[#f4f4f4] bg-white">
      <div className="flex h-[118px] items-center pl-[44px] text-[42px] text-[#666]">
        <FitText className="w-[86px]">看点</FitText>
        <FitText className="ml-[67px] w-[86px]">资讯</FitText>
        <FitText className="ml-[66px] w-[86px]">盘口</FitText>
        <div className="relative ml-[66px]">
          <FitText className="w-[86px]">资金</FitText>
          <span className="absolute -top-[8px] -right-[13px] size-3 rounded-full bg-[#e03030]" />
        </div>
        <FitText className="ml-[78px] w-[86px]">社区</FitText>
        <FitText className="ml-[47px] w-[217px] text-[48px] font-bold text-[#2e2e2e]">简况(F10)</FitText>
        <FitText className="ml-[48px] w-[42px] text-[#e8e8e8]">财</FitText>
      </div>
    </div>
  );
}

function Action({ width, label, labelWidth, children }) {
  return (
    <div className={`flex flex-col items-center ${width}`}>
      <svg width="66" height="58" viewBox="0 0 66 58" fill="none" stroke="#d8d8d8" strokeWidth="2.800">
        {children}
      </svg>
      <FitText className={`mt-[9px] text-[32px] text-[#d8d8d8] ${labelWidth}`}>{label}</FitText>
    </div>
  );
}

function ActionBar() {
  return (
    <div className="flex h-[159px] pl-[40px]">
      <div className="flex w-[170px] flex-col items-center pt-3">
        <svg width="26" height="15" viewBox="0 0 26 15" fill="#b0b0b0" className="-ml-[2px]">
          <path d="M13 0l13 15H0z" />
        </svg>
        <FitText className="mt-[19px] w-[130px] text-[32px] text-[#c0c0c0]">医疗器械</FitText>
        <FitText className="mt-6 w-[108px] text-[35px] text-[#1ee61e]">-0.27%</FitText>
      </div>
      <div className="flex pt-[21px] pl-[38px]">
        <Action width="w-[208px]" label="下单" labelWidth="w-[64px]">
          <path d="M15 4h36q5 0 5 5v33L46 55H15q-5 0-5-5V9q0-5 5-5zM17 17h32M17 25h32M17 32h32M17 39h22" />
        </Action>
        <Action width="w-[208px]" label="诊股" labelWidth="w-[64px]">
          <rect x="6" y="12" width="54" height="41" rx="6" />
          <path d="M22 7h22M33 24v18M24 33h18M13 55h10M43 55h10" />
        </Action>
        <Action width="w-[208px]" label="删自选" labelWidth="w-[98px]">
          <path d="M10 6h46v45H10zM21 29h24" />
        </Action>
        <div className="relative">
          <Action width="w-[208px]" label="功能" labelWidth="w-[64px]">
            <circle cx="33" cy="29" r="24" />
            <path d="M22 22h22M22 36h22" />
          </Action>
          <span className="absolute top-[2px] left-[135px] size-[18px] rounded-full bg-[#ea3030]" />
        </div>
      </div>
    </div>
  );
}

function SystemNav() {
  return (
    <div className="flex h-[110px] items-center">
      <svg width="40" height="42" viewBox="0 0 40 42" className="ml-[281px]" stroke="#aaa" strokeWidth="5" strokeLinecap="round">
        <path d="M3 6h34M3 21h34M3 36h34" />
      </svg>
      <svg width="42" height="42" viewBox="0 0 42 42" className="ml-[194px]" fill="none" stroke="#aaa" strokeWidth="4.500">
        <rect x="3" y="3" width="36" height="36" rx="8" />
      </svg>
      <svg width="28" height="42" viewBox="0 0 28 42" className="ml-[199px]" fill="none" stroke="#aaa" strokeWidth="4.500" strokeLinecap="round" strokeLinejoin="round">
        <path d="M24 3L5 19q-2 2 0 4l19 16" />
      </svg>
    </div>
  );
}

export default function App() {
  return (
    <div className="h-[2400px] w-[1080px] overflow-hidden bg-white font-[Roboto,'Noto_Sans_CJK_SC',sans-serif]">
      <header className="h-[236px] bg-[#f03038]">
        <StatusBar />
        <NavBar />
      </header>
      <Quote />
      <News />
      <div className="h-3 bg-[#f4f4f4]" />
      <PeriodTabs />
      <Averages />
      <main className="flex h-[1265px] pt-px pl-3">
        <div className="w-[647px]">
          <PriceChart />
          <DateAxis />
          <VolumePanel />
          <MacdPanel />
        </div>
        <ChipPanel />
      </main>
      <InfoTabs />
      <footer className="h-[279px] bg-[#242424]">
        <ActionBar />
        <SystemNav />
      </footer>
    </div>
  );
}
